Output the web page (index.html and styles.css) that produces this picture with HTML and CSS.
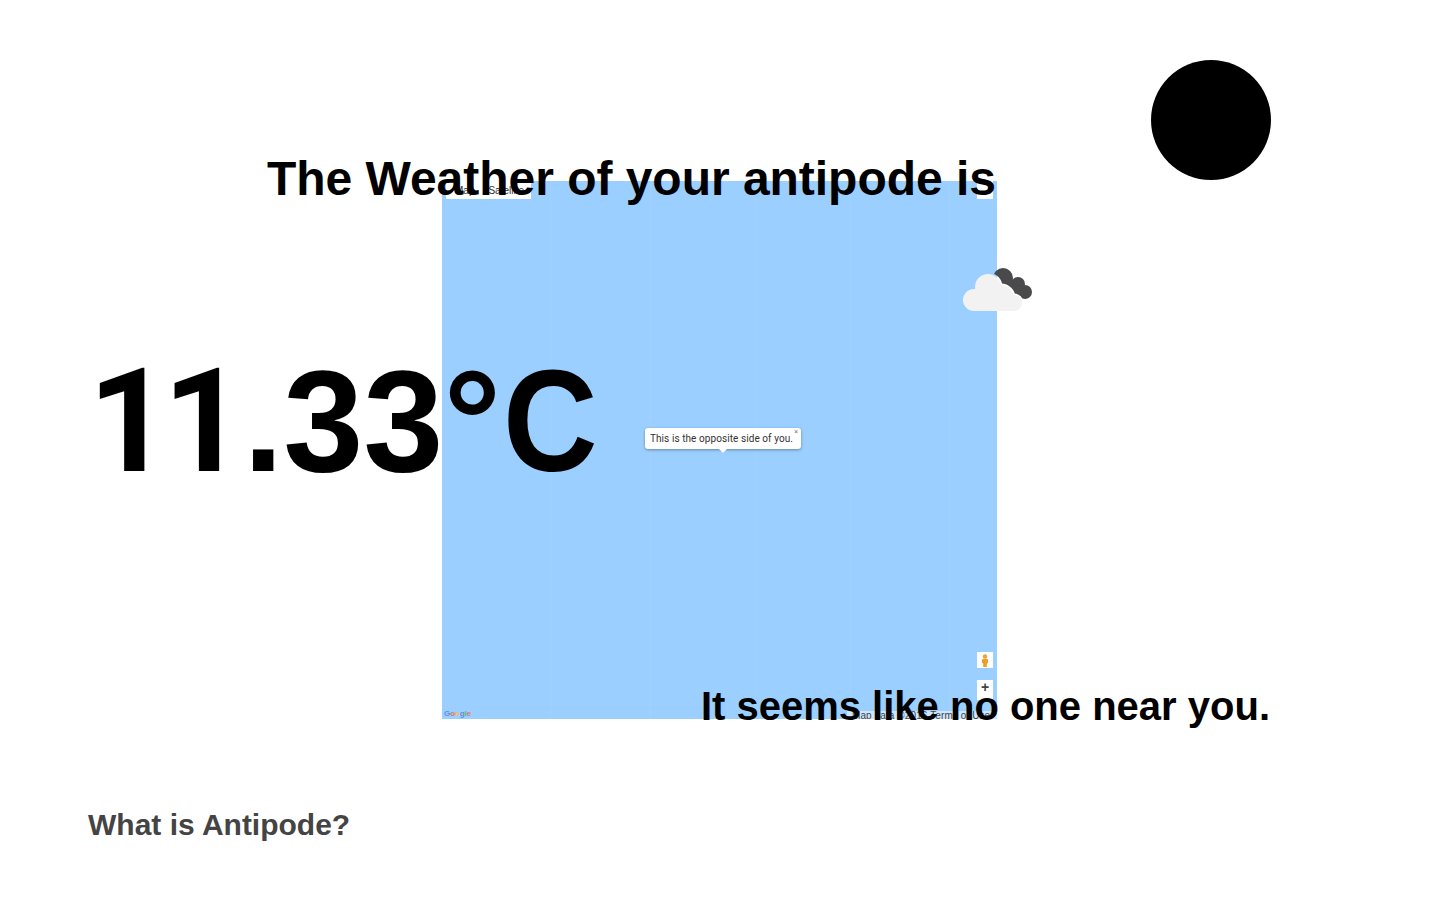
FILE: index.html
```html
<!DOCTYPE html>
<html lang="en">
<head>
<meta charset="utf-8">
<title>Antipode</title>
<link rel="stylesheet" href="styles.css">
</head>
<body>
<main class="page">
  <div class="sun"></div>
  <h1 class="title">The Weather of your antipode is</h1>
  <section class="map">
    <div class="map-type"><span class="map-btn">Map</span><span class="map-btn">Satellite</span></div>
    <div class="fullscreen"></div>
    <div class="bubble">This is the opposite side of you.<span class="bubble-close">×</span></div>
    <div class="pegman">
      <svg width="8" height="13" viewBox="0 0 8 13"><circle cx="4" cy="2.400" r="2.200" fill="#f0a232"/><path d="M1 5.400Q4 3.600 7 5.400V9L5.800 9.400V13H2.200V9.400L1 9Z" fill="#ee9c22"/></svg>
    </div>
    <div class="zoom-ctl">+</div>
    <div class="google"><span class="g-b">G</span><span class="g-r">o</span><span class="g-y">o</span><span class="g-b">g</span><span class="g-g">l</span><span class="g-r">e</span></div>
    <div class="attrib">Map data ©2016 Terms of Use</div>
  </section>
  <svg class="cloud" width="72" height="46" viewBox="0 0 72 46">
    <defs>
      <mask id="cloud-gap" maskUnits="userSpaceOnUse" x="0" y="0" width="72" height="46">
        <rect width="72" height="46" fill="#fff"/>
        <g fill="#000" stroke="#000" stroke-width="3">
          <circle cx="26" cy="20" r="13"/><circle cx="39" cy="31" r="13"/><circle cx="52" cy="36" r="8"/>
        </g>
      </mask>
    </defs>
    <g fill="#4a4a4c" mask="url(#cloud-gap)">
      <circle cx="41" cy="11" r="10"/><circle cx="56" cy="17" r="7"/><circle cx="63" cy="25" r="7"/><circle cx="48" cy="22" r="10"/><circle cx="56" cy="25" r="7"/>
    </g>
    <g fill="#f2f2f2">
      <circle cx="12" cy="33" r="11"/><circle cx="26" cy="20" r="13"/><circle cx="39" cy="31" r="13"/><circle cx="52" cy="36" r="8"/>
      <rect x="12" y="30" width="40" height="14"/>
    </g>
  </svg>
  <div class="temp"><span class="one-a">1</span><span class="one-b">1</span>.33°<span class="unit">C</span></div>
  <p class="near">It seems like no one near you.</p>
  <a class="what">What is Antipode?</a>
</main>
</body>
</html>
```
FILE: styles.css
```css
* { box-sizing: border-box; }
html, body { margin: 0; padding: 0; background: #fff; }
body { font-family: "Liberation Sans", Arial, sans-serif; color: #000; overflow: hidden; }
.page { position: relative; width: 1440px; height: 900px; padding: 181px 443px 0 442px; }
.sun { position: absolute; left: 1151px; top: 60px; width: 120px; height: 120px; border-radius: 50%; background: #000; }
.title { position: absolute; z-index: 3; left: 267px; top: 151px; margin: 0; font-size: 48px; letter-spacing: -.03px; line-height: 56px; font-weight: 700; white-space: nowrap; }
.map {
  position: relative; width: 555px; height: 538px; overflow: hidden;
  background-color: #9bcfff;
  background-image: linear-gradient(90deg, transparent 0, transparent 108px, #a0d1ff 108px, #a0d1ff 109px, transparent 109px, transparent 208px, #a0d1ff 208px, #a0d1ff 209px, transparent 209px, transparent 313px, #a0d1ff 313px, #a0d1ff 314px, transparent 314px, transparent 408px, #a0d1ff 408px, #a0d1ff 409px, transparent 409px, transparent 507px, #a0d1ff 507px, #a0d1ff 508px, transparent 508px);
}
.map-type { position: absolute; left: 4px; top: 0; height: 18px; width: 85px; display: flex; background: #fff; font-size: 10px; line-height: 19px; color: #333; }
.map-btn { padding: 0 5px 0 9px; }
.fullscreen { position: absolute; right: 4px; top: 0; width: 16px; height: 18px; background: #fff; }
.bubble {
  position: absolute; left: 203px; top: 247px; width: 156px; height: 21px; padding: 4px 0 0 5px;
  background: #fff; border-radius: 3px; box-shadow: 0 1px 3px rgba(0,0,0,.35);
  font-family: Roboto, "Liberation Sans", sans-serif; font-size: 10px; letter-spacing: .07px; line-height: 13px; color: #333; white-space: nowrap;
}
.bubble::after { content: ""; position: absolute; left: 74px; top: 21px; border: 4px solid transparent; border-top-color: #fff; border-bottom: 0; }
.bubble-close { position: absolute; right: 3px; top: 0; font-size: 7px; line-height: 8px; color: #777; }
.pegman { position: absolute; left: 535px; top: 471px; width: 16px; height: 16px; padding: 2px 4px; background: #fff; display: flex; }
.zoom-ctl { position: absolute; left: 535px; top: 499px; width: 16px; height: 20px; background: #fff; color: #444; font-size: 14px; font-weight: 700; line-height: 14px; text-align: center; }
.google { position: absolute; left: 2px; top: 528px; font-size: 8px; line-height: 10px; font-weight: 700; letter-spacing: -.1px; }
.g-b { color: #5f8fe0; } .g-r { color: #e57368; } .g-y { color: #e8c45a; } .g-g { color: #5fb878; }
.attrib { position: absolute; right: 0; bottom: -2px; width: 150px; height: 10px; padding-left: 5px; background: rgba(255,255,255,.5); font-size: 10px; letter-spacing: .1px; line-height: 10px; color: #444; white-space: nowrap; overflow: hidden; }
.cloud { position: absolute; left: 962px; top: 267px; z-index: 2; }
.temp { position: absolute; z-index: 3; left: 88px; top: 339px; font-size: 144px; line-height: 165px; font-weight: 700; white-space: nowrap; }
.one-a, .one-b { font-family: Roboto, "Liberation Sans", sans-serif; }
.one-a { letter-spacing: -8px; }
.one-b { letter-spacing: -2px; }
.unit { display: inline-block; margin-left: 2px; transform: scaleX(.91); transform-origin: left center; }
.near { position: absolute; z-index: 3; right: 170px; top: 683px; margin: 0; font-size: 40px; line-height: 46px; font-weight: 700; white-space: nowrap; }
.what { position: absolute; left: 88px; top: 807px; font-size: 30px; line-height: 35px; font-weight: 700; color: #444; white-space: nowrap; }
```
